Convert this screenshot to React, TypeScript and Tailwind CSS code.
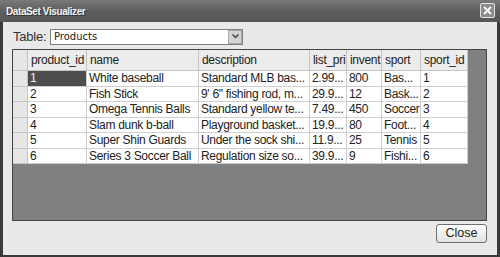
const cols = [
  { key: 'product_id', w: 'w-[59px]' },
  { key: 'name', w: 'w-[112px]' },
  { key: 'description', w: 'w-[111px]' },
  { key: 'list_pri', w: 'w-[37px]' },
  { key: 'invent', w: 'w-[35px]' },
  { key: 'sport', w: 'w-[39px]' },
  { key: 'sport_id', w: 'w-[47px]' },
];

const rows = [
  ['1', 'White baseball', 'Standard MLB bas...', '2.99...', '800', 'Bas...', '1'],
  ['2', 'Fish Stick', '9\' 6" fishing rod, m...', '29.9...', '12', 'Bask...', '2'],
  ['3', 'Omega Tennis Balls', 'Standard yellow te...', '7.49...', '450', 'Soccer', '3'],
  ['4', 'Slam dunk b-ball', 'Playground basket...', '19.9...', '80', 'Foot...', '4'],
  ['5', 'Super Shin Guards', 'Under the sock shi...', '11.9...', '25', 'Tennis', '5'],
  ['6', 'Series 3 Soccer Ball', 'Regulation size so...', '39.9...', '9', 'Fishi...', '6'],
];

export default function App() {
  return (
    <div className="w-[500px] h-[257px] bg-[#3a3a3a] flex flex-col font-['Liberation_Sans',Arial,sans-serif] overflow-hidden">
      {/* title bar */}
      <div className="h-[22px] shrink-0 flex items-center justify-between pl-[6px] pr-[5px] bg-gradient-to-b from-[#7a7a7a] via-[#5e5e5e] to-[#565656]">
        <span className="text-[10px] font-bold text-[#f4f4f4] tracking-[-0.4px] [text-shadow:1px_1px_0_#333]">
          DataSet Visualizer
        </span>
        <div className="w-[15px] h-[15px] mt-[-2px] border border-[#e4e4e4] rounded-[2px] bg-[#8a8a8a] flex items-center justify-center">
          <svg width="9" height="9" viewBox="0 0 9 9">
            <path d="M1 1 L8 8 M8 1 L1 8" stroke="#fff" strokeWidth="1.8" />
          </svg>
        </div>
      </div>

      {/* body */}
      <div className="flex-1 mx-[3px] mb-[2px] bg-[#e9e9e9] flex flex-col pl-[9px] pr-[10px] pt-[6px]">
        <div className="flex items-center h-[17px]">
          <span className="text-[13px] text-[#333] w-[38px] pl-[1px] tracking-[-0.2px]">Table:</span>
          <div className="w-[193px] h-[16px] bg-white border border-[#7f7f7f] flex items-center justify-between">
            <span className="text-[10px] text-[#222] pl-[3px] font-['DejaVu_Sans',sans-serif]">Products</span>
            <div className="w-[14px] h-[14px] bg-[#d4d4d4] border border-[#aaa] flex items-center justify-center">
              <svg width="7" height="5" viewBox="0 0 7 5">
                <path d="M0.5 0.5 L3.5 3.5 L6.5 0.5" stroke="#444" strokeWidth="1.5" fill="none" />
              </svg>
            </div>
          </div>
        </div>

        {/* grid */}
        <div className="mt-[4px] h-[172px] border border-[#444] bg-[#808080] flex flex-col items-start">
          <div className="flex text-[12px] tracking-[-0.3px] text-[#222]">
            <div className="w-[15px] h-[21px] bg-[#e6e6e6] border-r border-b border-[#c4c4c4]" />
            {cols.map((c) => (
              <div
                key={c.key}
                className={`${c.w} h-[21px] bg-[#ececec] border-r border-b border-[#c4c4c4] pl-[3px] flex items-center overflow-hidden whitespace-nowrap`}
              >
                {c.key}
              </div>
            ))}
          </div>
          {rows.map((r, i) => (
            <div key={i} className="flex text-[12px] tracking-[-0.3px] text-[#222]">
              <div className="w-[15px] h-[15.5px] bg-[#e6e6e6] border-r border-b border-[#c4c4c4]" />
              {r.map((v, j) => (
                <div
                  key={j}
                  className={`${cols[j].w} h-[15.5px] border-r border-b border-[#cfcfcf] pl-[2px] flex items-center overflow-hidden whitespace-nowrap ${
                    i === 0 && j === 0 ? 'bg-[#4e4e4e] text-[#eee]' : 'bg-white'
                  }`}
                >
                  {v}
                </div>
              ))}
            </div>
          ))}
        </div>

        <div className="flex justify-end mt-[3px]">
          <button className="w-[51px] h-[19px] bg-gradient-to-b from-white to-[#e2e2e2] border border-[#6f6f6f] rounded-[3px] text-[12.5px] text-[#222] flex items-center justify-center">
            Close
          </button>
        </div>
      </div>
    </div>
  );
}
